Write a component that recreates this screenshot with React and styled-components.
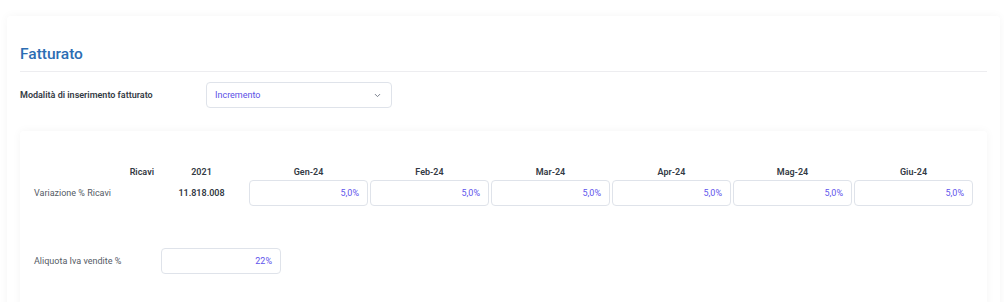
import React from "react";
import styled, { createGlobalStyle } from "styled-components";

const Global = createGlobalStyle`
  html, body { margin: 0; padding: 0; background: #ffffff; }
  body { font-family: Roboto, Inter, "Noto Sans", Arial, sans-serif; -webkit-font-smoothing: antialiased; }
  * { box-sizing: border-box; }
`;

const Page = styled.div`
  padding: 16px 4px 0 7px;
`;

const OuterCard = styled.section`
  background: #fff;
  border-radius: 4px;
  box-shadow: 0 0 10px rgba(0, 0, 0, 0.045);
  padding: 27px 13px 0 13px;
  min-height: 300px;
`;

const Title = styled.h2`
  margin: 0;
  font-size: 15.5px;
  font-weight: 500;
  line-height: 22px;
  color: #2c6db3;
  padding-bottom: 6px;
  border-bottom: 1px solid #ededf0;
`;

const FieldRow = styled.div`
  display: flex;
  align-items: center;
  margin-top: 10px;
`;

const FieldLabel = styled.label`
  width: 186px;
  font-size: 9px;
  font-weight: 600;
  color: #333a44;
`;

const Select = styled.div`
  width: 186px;
  height: 26px;
  border: 1px solid #dfe3ea;
  border-radius: 4px;
  display: flex;
  align-items: center;
  justify-content: space-between;
  padding: 0 9px 0 8px;
  font-size: 9px;
  color: #5b4fe6;
`;

const InnerCard = styled.div`
  margin-top: 23px;
  background: #fff;
  border-radius: 4px;
  box-shadow: 0 0 10px rgba(0, 0, 0, 0.045);
  padding: 34px 14px 30px 14px;
  min-height: 180px;
`;

const Grid = styled.div`
  display: grid;
  grid-template-columns: 120px 91px repeat(6, 119px);
  column-gap: 2px;
  row-gap: 1px;
  align-items: center;
`;

const HeadCell = styled.div`
  font-size: 9px;
  font-weight: 600;
  color: #333a44;
  line-height: 14px;
  text-align: ${(p) => p.$align || "center"};
`;

const RowLabel = styled.div`
  font-size: 9px;
  color: #555b66;
  line-height: 14px;
`;

const ValueCell = styled.div`
  font-size: 9px;
  font-weight: 600;
  color: #333a44;
  text-align: center;
`;

const NumInput = styled.div`
  height: 26px;
  width: ${(p) => p.$w || "119px"};
  border: 1px solid #dfe3ea;
  border-radius: 4px;
  display: flex;
  align-items: center;
  justify-content: flex-end;
  padding: 0 8px;
  font-size: 9px;
  color: #5f55ec;
`;

const VatRow = styled.div`
  display: flex;
  align-items: center;
  margin-top: 42px;
`;

const VatLabel = styled(RowLabel)`
  width: 127px;
`;

const Chevron = () => (
  <svg width="9" height="9" viewBox="0 0 24 24" fill="none" stroke="#6b7280" strokeWidth="2.4" strokeLinecap="round" strokeLinejoin="round">
    <path d="M6 9l6 6 6-6" />
  </svg>
);

const months = ["Gen-24", "Feb-24", "Mar-24", "Apr-24", "Mag-24", "Giu-24"];

export default function App() {
  return (
    <>
      <Global />
      <Page>
        <OuterCard>
          <Title>Fatturato</Title>
          <FieldRow>
            <FieldLabel>Modalità di inserimento fatturato</FieldLabel>
            <Select>
              <span>Incremento</span>
              <Chevron />
            </Select>
          </FieldRow>
          <InnerCard>
            <Grid>
              <HeadCell $align="right">Ricavi</HeadCell>
              <HeadCell>2021</HeadCell>
              {months.map((m) => (
                <HeadCell key={m}>{m}</HeadCell>
              ))}
              <RowLabel>Variazione % Ricavi</RowLabel>
              <ValueCell>11.818.008</ValueCell>
              {months.map((m) => (
                <NumInput key={m}>5,0%</NumInput>
              ))}
            </Grid>
            <VatRow>
              <VatLabel>Aliquota Iva vendite %</VatLabel>
              <NumInput $w="120px">22%</NumInput>
            </VatRow>
          </InnerCard>
        </OuterCard>
      </Page>
    </>
  );
}
